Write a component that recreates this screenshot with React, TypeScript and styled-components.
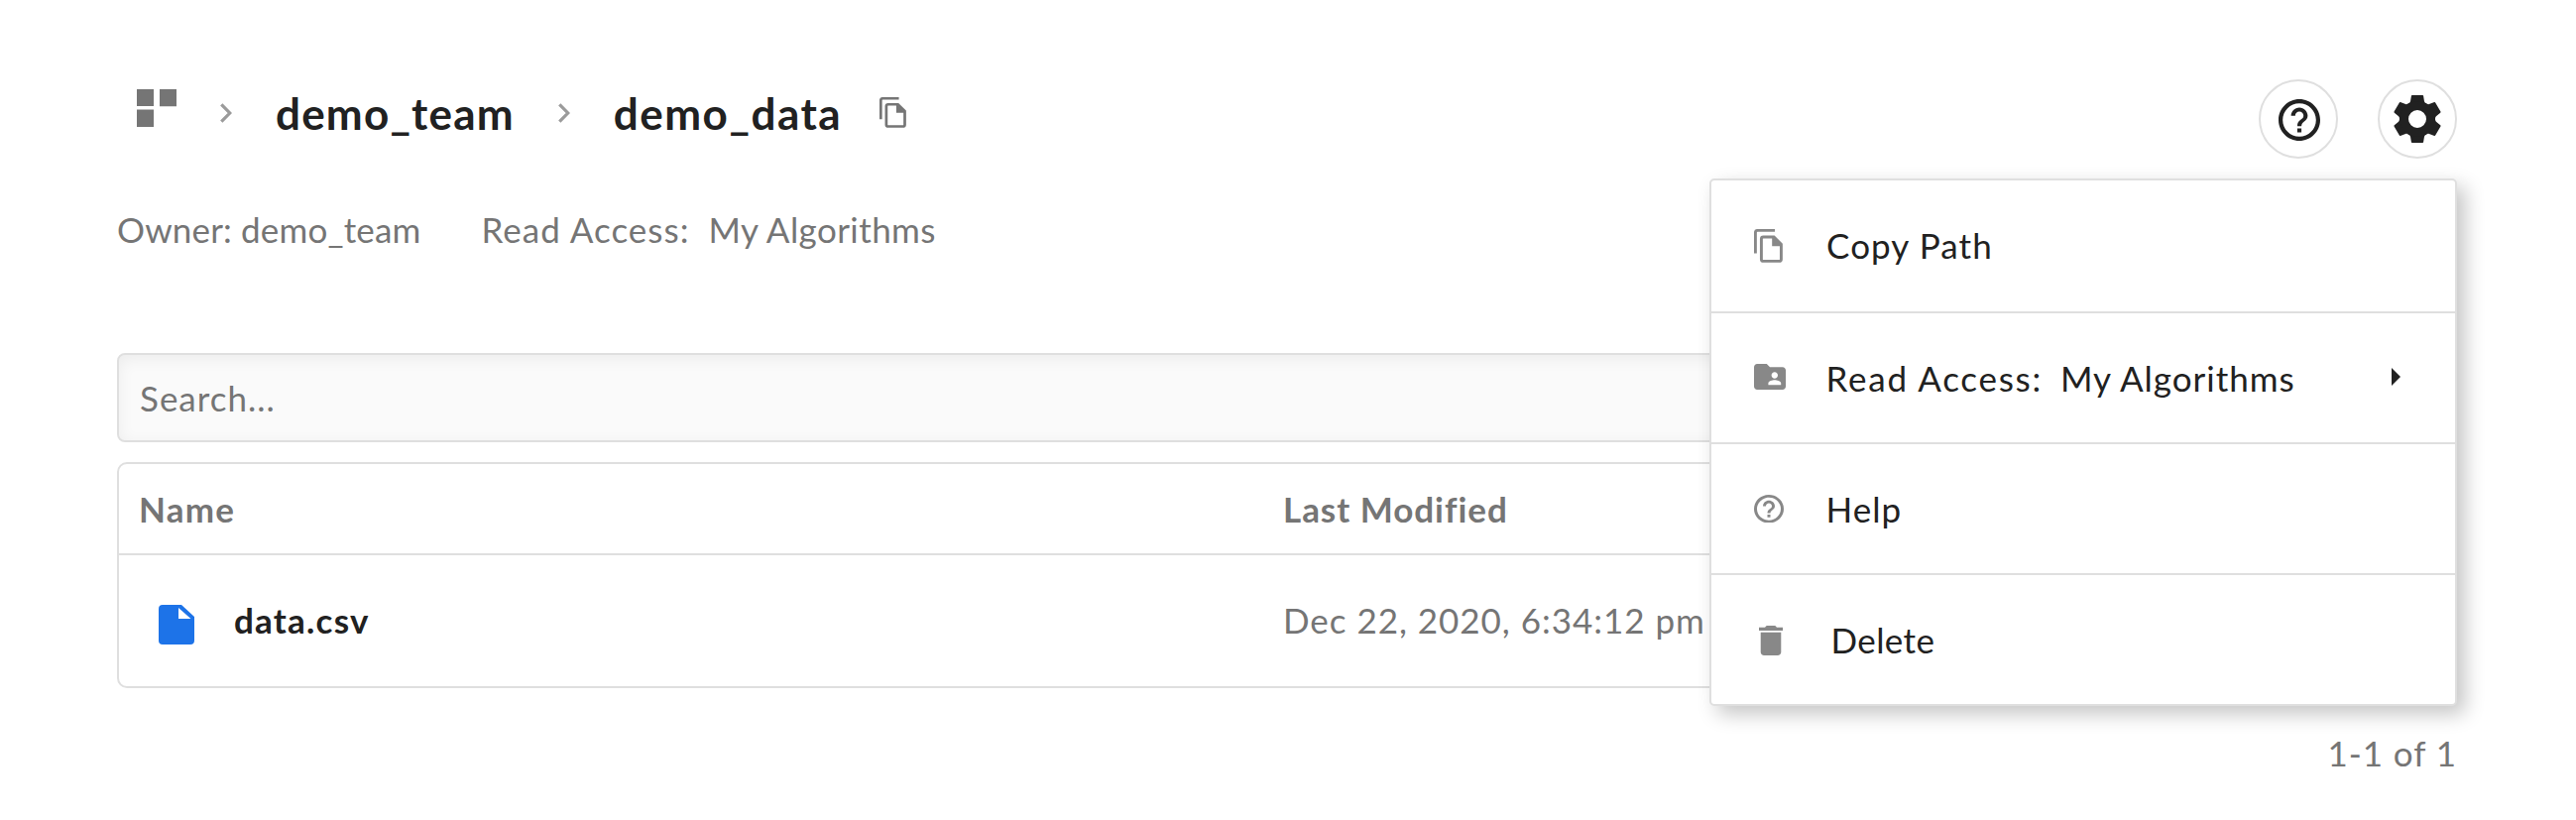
import React from "react";
import styled, { createGlobalStyle } from "styled-components";

const ink = "#212121";
const muted = "#757575";
const line = "#dfdfdf";

const GlobalStyle = createGlobalStyle`
  *, *::before, *::after { box-sizing: border-box; }
  body { margin: 0; background: #fff; }
  svg { display: block; flex: none; }
`;

const Page = styled.main`
  position: relative;
  height: 827px;
  padding: 80px 120px 0 118px;
  overflow: hidden;
  color: ${muted};
  font-family: Lato, "Open Sans", sans-serif;
  font-size: 35px;
  line-height: 48px;
`;

const Text = styled.span<{ $spacing?: number; $strong?: boolean; $dark?: boolean }>`
  margin: 1px 0 -1px;
  white-space: pre;
  letter-spacing: ${(p) => p.$spacing ?? 1}px;
  font-weight: ${(p) => (p.$strong ? 700 : 400)};
  color: ${(p) => (p.$dark ? ink : "inherit")};
`;

const Header = styled.header`
  display: flex;
  justify-content: space-between;
  height: 80px;
`;

const Breadcrumbs = styled.nav`
  display: flex;
  align-items: center;
  gap: 44px;
  height: 66px;
  padding-left: 20px;
`;

const Crumb = styled(Text)`
  font-size: 44px;
  line-height: 60px;
  font-weight: 700;
  color: ${ink};
`;

const TeamIcon = styled.svg`
  margin-bottom: 8px;
`;

const Separator = styled.svg`
  margin-top: 2px;
`;

const CopyButton = styled.button`
  margin: 0 0 0 -6px;
  padding: 0;
  border: 0;
  background: none;
  color: ${muted};
`;

const Actions = styled.div`
  display: flex;
  gap: 40px;
`;

const RoundButton = styled.button`
  display: flex;
  align-items: center;
  justify-content: center;
  width: 80px;
  height: 80px;
  padding: 0;
  border: 2px solid ${line};
  border-radius: 50%;
  background: #fff;
  color: ${ink};
`;

const HelpGlyph = styled.svg`
  margin: 2px 0 0 2px;
`;

const Meta = styled.div`
  display: flex;
  gap: 61px;
  margin-top: 46px;
`;

const Access = styled.div`
  display: flex;
  gap: 19px;
`;

const Search = styled.div`
  display: flex;
  align-items: center;
  height: 90px;
  margin-top: 102px;
  padding: 0 21px 2px;
  border: 2px solid ${line};
  border-radius: 8px;
  background: #fafafa;
  box-shadow: inset 0 4px 16px rgba(0, 0, 0, 0.06);
`;

const Table = styled.section`
  margin-top: 20px;
  border: 2px solid ${line};
  border-radius: 10px;
`;

const HeadRow = styled.div`
  display: grid;
  grid-template-columns: 1154px 1fr;
  align-items: center;
  height: 92px;
  padding: 0 20px 2px;
  border-bottom: 2px solid ${line};
`;

const FileRow = styled.div`
  display: grid;
  grid-template-columns: 1154px 1fr;
  align-items: center;
  height: 132px;
  padding: 0 20px 4px;
`;

const FileCell = styled.div`
  display: flex;
  align-items: center;
  gap: 40px;
  padding-left: 20px;
`;

const FileIcon = styled.svg`
  margin-top: 12px;
`;

const Pager = styled.footer`
  display: flex;
  justify-content: flex-end;
  margin-top: 40px;
`;

const Menu = styled.div`
  position: absolute;
  top: 180px;
  right: 120px;
  width: 754px;
  border: 2px solid ${line};
  border-radius: 5px;
  background: #fff;
  color: ${ink};
  box-shadow: 8px 8px 20px rgba(0, 0, 0, 0.23);
`;

const MenuItem = styled.div<{ $lift?: number }>`
  display: flex;
  align-items: center;
  height: 132px;
  padding: 0 55px ${(p) => p.$lift ?? 2}px 43px;
  & + & { border-top: 2px solid ${line}; }
`;

const IconSlot = styled.span<{ $shift?: number; $drop?: number }>`
  width: 72px;
  padding-left: ${(p) => p.$shift ?? 0}px;
  padding-top: ${(p) => p.$drop ?? 0}px;
  color: #888;
`;

const Label = styled.span<{ $indent?: number }>`
  display: flex;
  flex: 1;
  gap: 18px;
  padding-left: ${(p) => p.$indent ?? 0}px;
`;

const helpPath =
  "M11 18h2v-2h-2v2zm1-16C6.48 2 2 6.48 2 12s4.48 10 10 10 10-4.48 10-10S17.52 2 12 2zm0 18c-4.41 0-8-3.59-8-8s3.59-8 8-8 8 3.59 8 8-3.59 8-8 8zm0-14c-2.21 0-4 1.79-4 4h2c0-1.1.9-2 2-2s2 .9 2 2c0 2-3 1.75-3 5h2c0-2.25 3-2.5 3-5 0-2.21-1.79-4-4-4z";

const CopyIcon = ({ width, height }: { width: number; height: number }) => (
  <svg width={width} height={height} viewBox="0 0 29 34" preserveAspectRatio="none" fill="none" stroke="currentColor" strokeWidth="2.9">
    <path d="M1.4 24.5V3.6Q1.4 1.4 3.6 1.4H21" />
    <path d="M9.4 8H20L27.4 15.4V30.4Q27.4 32.4 25.4 32.4H9.4Q7.4 32.4 7.4 30.4V10Q7.4 8 9.4 8Z" />
    <path d="M18.2 7.5V17.2H28.2Z" fill="currentColor" stroke="none" />
  </svg>
);

const Chevron = () => (
  <Separator width="12" height="20" viewBox="0 0 12 20" fill="none" stroke="#9b9b9b" strokeWidth="3.2">
    <path d="M1.3 1.3L9.8 10L1.3 18.7" />
  </Separator>
);

const Gear = () => (
  <svg width="48" height="48" viewBox="-24 -24 48 48" fill="currentColor">
    {[0, 60, 120, 180, 240, 300].map((angle) => (
      <path key={angle} transform={`rotate(${angle})`} d="M-10 -15Q-7.3 -16.2 -7 -17.8L-6.1 -23.3Q-6 -24 -5.3 -24H5.3Q6 -24 6.1 -23.3L7 -17.8Q7.3 -16.2 10 -15L5 -10H-5Z" />
    ))}
    <circle r="13.3" fill="none" stroke="currentColor" strokeWidth="8.6" />
  </svg>
);

export default function App() {
  return (
    <Page>
      <GlobalStyle />
      <Header>
        <Breadcrumbs>
          <TeamIcon width="40" height="38" viewBox="0 0 40 38" fill="#757575">
            <path d="M0 0h17v17H0zM23 0h17v17.3H23zM0 20.5h17V38H0z" />
          </TeamIcon>
          <Chevron />
          <Crumb $spacing={1.2}>demo_team</Crumb>
          <Chevron />
          <Crumb $spacing={1.5}>demo_data</Crumb>
          <CopyButton aria-label="Copy path">
            <CopyIcon width={27} height={31} />
          </CopyButton>
        </Breadcrumbs>
        <Actions>
          <RoundButton aria-label="Help">
            <HelpGlyph width="42" height="42" viewBox="2 2 20 20" fill="currentColor">
              <path d={helpPath} />
            </HelpGlyph>
          </RoundButton>
          <RoundButton aria-label="Settings">
            <Gear />
          </RoundButton>
        </Actions>
      </Header>

      <Meta>
        <Text $spacing={0.16}>Owner: demo_team</Text>
        <Access>
          <Text $spacing={1.04}>Read Access:</Text>
          <Text $spacing={0.42}>My Algorithms</Text>
        </Access>
      </Meta>

      <Search>
        <Text>Search...</Text>
      </Search>

      <Table>
        <HeadRow>
          <Text $strong $spacing={1.2}>Name</Text>
          <Text $strong $spacing={0.96}>Last Modified</Text>
        </HeadRow>
        <FileRow>
          <FileCell>
            <FileIcon width="36" height="40" viewBox="0 0 36 40">
              <path fill="#1d73e8" fillRule="evenodd" d="M4 0H23L36 12V36Q36 40 32 40H4Q0 40 0 36V4Q0 0 4 0ZM20 3V14H32.5Z" />
            </FileIcon>
            <Text $strong $dark $spacing={1.22}>data.csv</Text>
          </FileCell>
          <Text $spacing={0.97}>Dec 22, 2020, 6:34:12 pm</Text>
        </FileRow>
      </Table>

      <Pager>
        <Text $spacing={0.95}>1-1 of 1</Text>
      </Pager>

      <Menu>
        <MenuItem $lift={4}>
          <IconSlot $drop={4}>
            <CopyIcon width={29} height={34} />
          </IconSlot>
          <Label $indent={1}>
            <Text $spacing={1.1}>Copy Path</Text>
          </Label>
        </MenuItem>
        <MenuItem>
          <IconSlot>
            <svg width="32" height="26" viewBox="2 4 20 16" preserveAspectRatio="none" fill="currentColor">
              <path d="M20 6h-8l-2-2H4c-1.1 0-1.99.9-1.99 2L2 18c0 1.1.9 2 2 2h16c1.1 0 2-.9 2-2V8c0-1.1-.9-2-2-2zm-5 3c1.1 0 2 .9 2 2s-.9 2-2 2-2-.9-2-2 .9-2 2-2zm4 8h-8v-1c0-1.33 2.67-2 4-2s4 .67 4 2v1z" />
            </svg>
          </IconSlot>
          <Label $indent={0.5}>
            <Text $spacing={1.74}>Read Access:</Text>
            <Text $spacing={0.98}>My Algorithms</Text>
          </Label>
          <svg width="9" height="18" viewBox="0 0 9 18" fill={ink}>
            <path d="M0 0L9 9L0 18Z" />
          </svg>
        </MenuItem>
        <MenuItem>
          <IconSlot $drop={2}>
            <svg width="30" height="28.5" viewBox="2 2 20 20" preserveAspectRatio="none" fill="currentColor">
              <path d={helpPath} />
            </svg>
          </IconSlot>
          <Label $indent={0.5}>
            <Text $spacing={1.03}>Help</Text>
          </Label>
        </MenuItem>
        <MenuItem>
          <IconSlot $shift={5} $drop={4}>
            <svg width="24" height="30" viewBox="5 3 14 18" preserveAspectRatio="none" fill="currentColor">
              <path d="M6 19c0 1.1.9 2 2 2h8c1.1 0 2-.9 2-2V7H6v12zM19 4h-3.5l-1-1h-5l-1 1H5v2h14V4z" />
            </svg>
          </IconSlot>
          <Label $indent={5.5}>
            <Text $spacing={0.4}>Delete</Text>
          </Label>
        </MenuItem>
      </Menu>
    </Page>
  );
}
